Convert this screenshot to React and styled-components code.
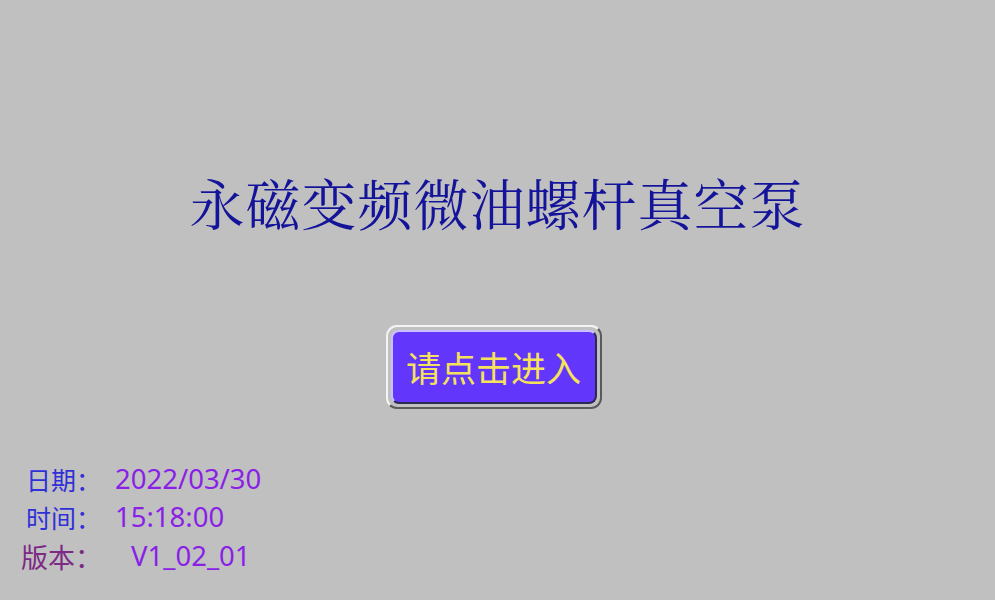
import React from "react";
import styled, { createGlobalStyle } from "styled-components";

const Global = createGlobalStyle`
  html, body { margin: 0; padding: 0; background: #c0c0c0; }
  body { font-family: "Noto Sans CJK SC", "Noto Sans", sans-serif; }
`;

const Screen = styled.div`
  width: 995px;
  height: 600px;
  background: #c0c0c0;
  display: flex;
  flex-direction: column;
  box-sizing: border-box;
  overflow: hidden;
`;

const Title = styled.h1`
  margin: 170px 0 0 0;
  text-align: center;
  font-family: "Noto Serif CJK SC", "Noto Sans CJK SC", serif;
  font-weight: 400;
  font-size: 55px;
  line-height: 64px;
  letter-spacing: 1px;
  color: #14149a;
`;

const ButtonWrap = styled.div`
  display: flex;
  justify-content: center;
  margin-top: 91px;
  padding-right: 8px;
`;

const Frame = styled.div`
  display: flex;
  padding: 3px;
  border-radius: 11px;
  border: 2px solid;
  border-color: #f4f4f4 #5a5a5a #5a5a5a #f4f4f4;
  background: #c0c0c0;
`;

const EnterButton = styled.button`
  width: 206px;
  height: 74px;
  border-radius: 8px;
  border: 2px solid;
  border-color: #c8c0ff #2a2a55 #2a2a55 #c8c0ff;
  background: #6236fb;
  color: #f6e25a;
  font-family: "Noto Sans CJK SC", sans-serif;
  font-size: 35px;
  line-height: 1;
  padding: 0 0 2px 0;
  cursor: pointer;
`;

const Info = styled.div`
  display: flex;
  flex-direction: column;
  margin-top: 51px;
`;

const Row = styled.div`
  display: flex;
  align-items: center;
  height: ${(p) => p.$h}px;
  padding-left: ${(p) => p.$indent}px;
`;

const Label = styled.span`
  font-family: "Noto Sans CJK SC", sans-serif;
  font-size: ${(p) => p.$size}px;
  color: ${(p) => p.$color};
  width: ${(p) => p.$w}px;
  line-height: 1;
`;

const Value = styled.span`
  font-family: "Noto Sans", "Noto Sans CJK SC", sans-serif;
  font-size: 27.5px;
  color: #8a1fe6;
  line-height: 1;
`;

export default function App() {
  return (
    <>
      <Global />
      <Screen>
        <Title>永磁变频微油螺杆真空泵</Title>
        <ButtonWrap>
          <Frame>
            <EnterButton>请点击进入</EnterButton>
          </Frame>
        </ButtonWrap>
        <Info>
          <Row $h={38} $indent={26}>
            <Label $size={25} $color="#3030d8" $w={89}>日期：</Label>
            <Value>2022/03/30</Value>
          </Row>
          <Row $h={38} $indent={26}>
            <Label $size={25} $color="#3030d8" $w={89}>时间：</Label>
            <Value>15:18:00</Value>
          </Row>
          <Row $h={40} $indent={21}>
            <Label $size={27} $color="#7c2a86" $w={110}>版本：</Label>
            <Value>V1_02_01</Value>
          </Row>
        </Info>
      </Screen>
    </>
  );
}
